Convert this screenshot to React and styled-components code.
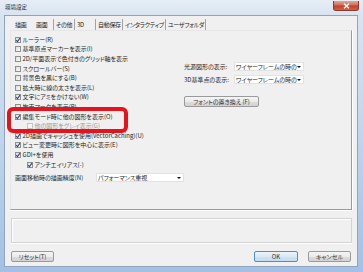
import React from "react";
import styled, { createGlobalStyle } from "styled-components";

const GlobalStyle = createGlobalStyle`
  html, body { margin: 0; padding: 0; }
  body {
    width: 363px;
    height: 272px;
    overflow: hidden;
    font-family: "Noto Sans CJK JP", "Noto Sans", sans-serif;
    font-feature-settings: "palt";
    font-size: 6px;
    line-height: 1;
    color: #262626;
  }
`;

const tabs = ["描画", "画面", "その他", "3D", "自動保存", "インタラクティブ", "ユーザフォルダ"];

const checks = [
  { label: "ルーラー(R)", on: true },
  { label: "基準原点マーカーを表示(I)" },
  { label: "2D/平面表示で色付きのグリッド軸を表示" },
  { label: "スクロールバー(S)" },
  { label: "背景色を黒にする(B)" },
  { label: "拡大時に線の太さを表示(L)" },
  { label: "文字にアミをかけない(W)", on: true },
  { label: "拘束マークを表示(P)" },
  { label: "編集モード時に他の図形を表示(O)", on: true },
  { label: "他の図形をグレイ表示(G)", sub: true, off: true },
  { label: "2D描画でキャッシュを使用(VectorCaching)(U)", on: true },
  { label: "ビュー変更時に図形を中心に表示(E)", on: true },
  { label: "GDI+を使用", on: true },
  { label: "アンチエイリアス(-)", sub: true, on: true },
];

const Window = styled.div`
  width: 363px;
  height: 272px;
  box-sizing: border-box;
  display: flex;
  flex-direction: column;
  padding: 0 5px 5px 4px;
  background: linear-gradient(#e6edf6 0px, #d9e4f1 15px, #c4d7ed 45%, #a4c0e4 100%);
`;

const TitleBar = styled.div`
  height: 15px;
  display: flex;
  justify-content: space-between;
  align-items: flex-start;
`;

const Title = styled.div`
  font-size: 5.5px;
  padding: 5px 0 0 1px;
  color: #1f1f1f;
`;

const CloseButton = styled.div`
  width: 26px;
  height: 10px;
  margin: 1px -1px 0 0;
  box-sizing: border-box;
  border: 1px solid #8a3a2f;
  border-top: none;
  border-radius: 0 0 3px 3px;
  background: linear-gradient(#e4a696 0%, #d46e57 45%, #c2402a 55%, #d9603f 100%);
  display: flex;
  align-items: center;
  justify-content: center;
`;

const Client = styled.div`
  flex: 1;
  display: flex;
  flex-direction: column;
  background: #f0f0f0;
  border: 1px solid #8fa4bf;
  padding: 3px 5px 4px 5px;
`;

const TabStrip = styled.div`
  height: 11px;
  display: flex;
  padding-left: 1px;
`;

const Tab = styled.div`
  box-sizing: border-box;
  min-width: 21px;
  height: 11px;
  display: flex;
  align-items: center;
  white-space: nowrap;
  letter-spacing: -0.3px;
  padding: ${(p) => (p.$lead ? "0 4px" : "0 1px 0 2px")};
  border-left: ${(p) => (p.$lead ? "none" : "1px solid #a3a3a3")};
  border-right: ${(p) => (p.$last ? "1px solid #a3a3a3" : "none")};
`;

const Panel = styled.div`
  position: relative;
  height: 180px;
  box-sizing: border-box;
  border: 1px solid;
  border-color: #e6e6e6 #9c9c9c #9c9c9c #e6e6e6;
  box-shadow: 1px 0 0 #fff, 0 1px 0 #fff;
  padding: 4px 0 0 4px;
  display: grid;
  grid-template-columns: 169px 1fr;
`;

const LeftColumn = styled.div`
  display: flex;
  flex-direction: column;
`;

const RightColumn = styled.div`
  display: flex;
  flex-direction: column;
  padding-top: 27px;
`;

const CheckRow = styled.div`
  height: 9.6px;
  display: flex;
  align-items: center;
  white-space: nowrap;
  padding-left: ${(p) => (p.$sub ? "12px" : "0")};
  color: ${(p) => (p.$off ? "#9a9a9a" : "#262626")};
`;

const Box = styled.span`
  width: 6px;
  height: 6px;
  box-sizing: border-box;
  margin-right: 1.5px;
  flex: none;
  border: 1px solid ${(p) => (p.$off ? "#c4c4c4" : "#8e8f8f")};
  background: ${(p) => (p.$off ? "#f4f4f4" : "linear-gradient(135deg, #dcdcdc, #fbfbfb)")};
  position: relative;
  svg {
    position: absolute;
    left: -1px;
    top: -1px;
  }
`;

const FieldRow = styled.div`
  display: flex;
  align-items: center;
  white-space: nowrap;
  margin-top: ${(p) => p.$top || 0}px;
`;

const FieldLabel = styled.span`
  min-width: ${(p) => p.$w}px;
  margin-right: 2px;
  flex: none;
`;

const Select = styled.div`
  position: relative;
  width: ${(p) => p.$w}px;
  height: 9px;
  box-sizing: border-box;
  background: #fff;
  border: 1px solid #e2e2e2;
  padding: 0 7px 0 1px;
  display: flex;
  align-items: center;
  &::after {
    content: "";
    position: absolute;
    right: 2px;
    top: 3px;
    border-left: 2px solid transparent;
    border-right: 2px solid transparent;
    border-top: 2.5px solid #111;
  }
`;

const Button = styled.div`
  width: ${(p) => p.$w}px;
  height: 11px;
  box-sizing: border-box;
  display: flex;
  align-items: center;
  justify-content: center;
  white-space: nowrap;
  border-radius: 2px;
  border: 1px solid ${(p) => (p.$default ? "#4b8fc4" : "#9a9a9a")};
  background: ${(p) =>
    p.$default
      ? "linear-gradient(#eaf3fa, #dbe9f4 50%, #cfe2f1 51%, #c6dcee)"
      : "linear-gradient(#f5f5f5, #ebebeb 50%, #dddddd 51%, #d2d2d2)"};
  color: #333;
`;

const Highlight = styled.div`
  position: absolute;
  left: -4px;
  top: 76px;
  width: 121px;
  height: 26px;
  box-sizing: border-box;
  border: 4px solid #e8121c;
  border-radius: 6px;
  pointer-events: none;
`;

const GroupBox = styled.div`
  height: 25px;
  margin: 8px 0 0 1px;
  box-sizing: border-box;
  border: 1px solid #d3d3d3;
  box-shadow: inset 1px 1px 0 #fff, 0 1px 0 #fff;
`;

const ButtonRow = styled.div`
  margin-top: auto;
  display: flex;
  align-items: center;
  padding: 0 1px 0 1px;
`;

const Spacer = styled.div`
  flex: 1;
`;

const ButtonGap = styled.div`
  width: 10px;
`;

const Check = () => (
  <svg width="6" height="6" viewBox="0 0 6 6">
    <path d="M1.2 3.2 L2.5 4.6 L5 1.2" fill="none" stroke="#2f4687" strokeWidth="1.1" />
  </svg>
);

export default function App() {
  return (
    <>
      <GlobalStyle />
      <Window>
        <TitleBar>
          <Title>環境設定</Title>
          <CloseButton>
            <svg width="7" height="6" viewBox="0 0 7 6">
              <path d="M1 0.8 L6 5.2 M6 0.8 L1 5.2" stroke="#fff" strokeWidth="1.5" />
            </svg>
          </CloseButton>
        </TitleBar>
        <Client>
          <TabStrip>
            {tabs.map((t, i) => (
              <Tab key={t} $lead={i < 2} $last={i === tabs.length - 1}>
                {t}
              </Tab>
            ))}
          </TabStrip>
          <Panel>
            <LeftColumn>
              {checks.map((c) => (
                <CheckRow key={c.label} $sub={c.sub} $off={c.off}>
                  <Box $off={c.off}>{c.on && <Check />}</Box>
                  {c.label}
                </CheckRow>
              ))}
              <FieldRow $top={4}>
                <FieldLabel $w={79}>画面移動時の描画精度(N)</FieldLabel>
                <Select $w={128}>パフォーマンス重視</Select>
              </FieldRow>
            </LeftColumn>
            <RightColumn>
              <FieldRow>
                <FieldLabel $w={48}>光源図形の表示:</FieldLabel>
                <Select $w={70}>ワイヤーフレームの時の</Select>
              </FieldRow>
              <FieldRow $top={4}>
                <FieldLabel $w={48}>3D基準点の表示:</FieldLabel>
                <Select $w={70}>ワイヤーフレームの時の</Select>
              </FieldRow>
              <FieldRow $top={12}>
                <Button $w={75}>フォントの置き換え (F)</Button>
              </FieldRow>
            </RightColumn>
            <Highlight />
          </Panel>
          <GroupBox />
          <ButtonRow>
            <Button $w={43}>リセット(T)</Button>
            <Spacer />
            <Button $w={44} $default>
              OK
            </Button>
            <ButtonGap />
            <Button $w={43}>キャンセル</Button>
          </ButtonRow>
        </Client>
      </Window>
    </>
  );
}
